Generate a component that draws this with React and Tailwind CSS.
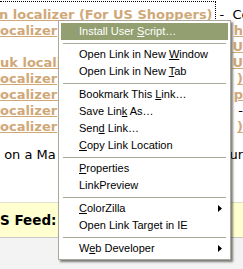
import React from "react";

const LINK = "text-[#d0a878] font-bold underline";

function Arrow() {
  return (
    <svg width="4" height="7" viewBox="0 0 4 7" className="block">
      <path d="M0 0 L4 3.5 L0 7 Z" fill="#000" />
    </svg>
  );
}

function Item({ children, hl, sub }) {
  return (
    <div
      className={
        "h-[17px] flex items-center justify-between pl-[18px] pr-[6px] whitespace-nowrap " +
        (hl ? "bg-[#939f70] text-white" : "text-black")
      }
    >
      <span>{children}</span>
      {sub ? <Arrow /> : null}
    </div>
  );
}

function Sep() {
  return (
    <div className="h-[6px] flex items-center px-[2px]">
      <div className="h-px w-full bg-[#aca899]" />
    </div>
  );
}

export default function App() {
  return (
    <div className="relative w-[243px] h-[269px] overflow-hidden bg-white">
      {/* page content */}
      <div className="font-['DejaVu_Sans',sans-serif] text-[13px] text-black">
        <div className="h-[7px]" />
        <div className="h-[16px] flex items-center whitespace-nowrap">
          <span className="relative">
            <span className={LINK + " -ml-[1px]"}>n localizer (For US Shoppers)</span>
            <span className="absolute left-0 right-[-3px] top-[-4px] bottom-[-2px] border-t border-r border-dotted border-black" />
          </span>
          <span className="ml-[7px]">-&nbsp;&nbsp;Co</span>
        </div>
        <div className="h-[16px] flex items-center justify-between whitespace-nowrap">
          <span className={LINK}>ocalizer</span>
          <span className={LINK}>h</span>
        </div>
        <div className="h-[16px] flex items-center justify-end">
          <span className={LINK}>U</span>
        </div>
        <div className="h-[16px] flex items-center justify-between whitespace-nowrap">
          <span className={LINK}>uk localiz</span>
          <span className={LINK}>U</span>
        </div>
        <div className="h-[16px] flex items-center justify-between whitespace-nowrap">
          <span className={LINK}>ocalizer</span>
          <span className={LINK}>)</span>
        </div>
        <div className="h-[16px] flex items-center justify-between whitespace-nowrap">
          <span className={LINK}>ocalizer (</span>
          <span className={LINK}>p</span>
        </div>
        <div className="h-[16px] flex items-center justify-between whitespace-nowrap">
          <span className={LINK}>ocalizer</span>
          <span>-</span>
        </div>
        <div className="h-[16px] flex items-center justify-between whitespace-nowrap">
          <span className={LINK}>ocalizer</span>
          <span className={LINK}>)</span>
        </div>
        <div className="h-[12px]" />
        <div className="h-[16px] flex items-center justify-between whitespace-nowrap">
          <span>&nbsp;on a Ma</span>
          <span>ur</span>
        </div>
        <div className="h-[39px]" />
        <div className="h-[36px] bg-[#ffffd0] border-t border-[#e0e0d0] border-b border-b-[#c8c8c8] flex items-center font-bold text-[13.5px]">
          S Feed:
        </div>
        <div className="h-[40px] bg-[#f3f3f3]" />
      </div>

      {/* context menu */}
      <div className="absolute left-[58px] top-[20px] w-[173px] h-[240px] bg-white border border-[#aca899] p-[2px] shadow-[2px_2px_2px_rgba(0,0,0,0.5)] font-['Liberation_Sans',sans-serif] text-[11px]">
        <Item hl>
          Install User <u>S</u>cript…
        </Item>
        <Sep />
        <Item>
          Open Link in New <u>W</u>indow
        </Item>
        <Item>
          Open Link in New <u>T</u>ab
        </Item>
        <Sep />
        <Item>
          Bookmark This <u>L</u>ink…
        </Item>
        <Item>
          Save Lin<u>k</u> As…
        </Item>
        <Item>
          Sen<u>d</u> Link…
        </Item>
        <Item>
          <u>C</u>opy Link Location
        </Item>
        <Sep />
        <Item>
          <u>P</u>roperties
        </Item>
        <Item>LinkPreview</Item>
        <Sep />
        <Item sub>
          <u>C</u>olorZilla
        </Item>
        <Item>Open Link Target in IE</Item>
        <Sep />
        <Item sub>
          W<u>e</u>b Developer
        </Item>
      </div>
    </div>
  );
}
